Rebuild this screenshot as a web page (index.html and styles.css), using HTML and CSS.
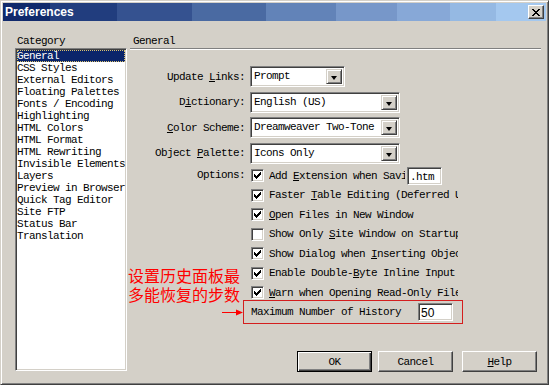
FILE: index.html
```html
<!DOCTYPE html>
<html lang="en">
	<head>
		<meta charset="UTF-8" />
		<link rel="stylesheet" href="styles.css">
		<title>Preferences</title>
	</head>
	<body>
		<div class="window">
			<div class="titlebar">
				<span class="title">Preferences</span>
				<span class="close">
					<svg width="8" height="7" viewBox="0 0 8 7" shape-rendering="crispEdges">
						<path d="M0 0h2v1h-2zM6 0h2v1h-2zM1 1h2v1h-2zM5 1h2v1h-2zM2 2h4v1h-4zM3 3h2v1h-2zM2 4h4v1h-4zM1 5h2v1h-2zM5 5h2v1h-2zM0 6h2v1h-2zM6 6h2v1h-2z" fill="#000"/>
					</svg>
				</span>
			</div>

			<div class="content">
				<div class="category">
					<div class="caption">Category</div>
					<ul class="list">
						<li class="selected">General</li>
						<li>CSS Styles</li>
						<li>External Editors</li>
						<li>Floating Palettes</li>
						<li>Fonts / Encoding</li>
						<li>Highlighting</li>
						<li>HTML Colors</li>
						<li>HTML Format</li>
						<li>HTML Rewriting</li>
						<li>Invisible Elements</li>
						<li>Layers</li>
						<li>Preview in Browser</li>
						<li>Quick Tag Editor</li>
						<li>Site FTP</li>
						<li>Status Bar</li>
						<li>Translation</li>
					</ul>
				</div>

				<div class="panel">
					<div class="panel-head">General</div>

					<div class="fields">
						<span class="label">Update <u>L</u>inks:</span>
						<div class="combo short"><span class="value">Prompt</span><span class="drop"></span></div>

						<span class="label">D<u>i</u>ctionary:</span>
						<div class="combo"><span class="value">English (US)</span><span class="drop"></span></div>

						<span class="label"><u>C</u>olor Scheme:</span>
						<div class="combo"><span class="value">Dreamweaver Two-Tone</span><span class="drop"></span></div>

						<span class="label">Object <u>P</u>alette:</span>
						<div class="combo"><span class="value">Icons Only</span><span class="drop"></span></div>
					</div>

					<div class="options">
						<span class="label opt-label">Options:</span>
						<div class="opt-list">
							<div class="opt">
								<span class="check on"></span>
								<span class="opt-text narrow">Add <u>E</u>xtension when Saving:</span>
								<span class="textbox ext">.htm</span>
							</div>
							<div class="opt">
								<span class="check on"></span>
								<span class="opt-text">Faster <u>T</u>able Editing (Deferred Update)</span>
							</div>
							<div class="opt">
								<span class="check on"></span>
								<span class="opt-text"><u>O</u>pen Files in New Window</span>
							</div>
							<div class="opt">
								<span class="check"></span>
								<span class="opt-text">Show Only <u>S</u>ite Window on Startup</span>
							</div>
							<div class="opt">
								<span class="check on"></span>
								<span class="opt-text">Show Dialog when <u>I</u>nserting Objects</span>
							</div>
							<div class="opt">
								<span class="check on"></span>
								<span class="opt-text">Enable Double-<u>B</u>yte Inline Input</span>
							</div>
							<div class="opt">
								<span class="check on"></span>
								<span class="opt-text"><u>W</u>arn when Opening Read-Only Files</span>
							</div>
							<div class="opt history">
								<span class="history-text">Maximum Number of History</span>
								<span class="textbox num">50</span>

								<!-- annotation drawn over the dialog -->
								<span class="mark"></span>
								<span class="note">设置历史面板最<br>多能恢复的步数</span>
								<svg class="arrow" width="22" height="7" viewBox="0 0 22 7">
									<path d="M0 3.5h15" stroke="#ff0000" stroke-width="1"/>
									<path d="M14 0.5L21 3.5L14 6.5z" fill="#ff0000"/>
								</svg>
							</div>
						</div>
					</div>

					<div class="buttons">
						<button class="btn default">OK</button>
						<button class="btn cancel">Cancel</button>
						<button class="btn help"><u>H</u>elp</button>
					</div>
				</div>
			</div>
		</div>
	</body>
</html>
```

FILE: styles.css
```css
* {
	padding: 0;
	margin: 0;
	box-sizing: border-box;
}

body {
	background-color: #d4d0c8;
	font-family: "Liberation Mono", "DejaVu Sans Mono", monospace;
	font-size: 11px;
	letter-spacing: -0.6px;
	color: #000;
}

u {
	text-decoration: underline;
	text-underline-offset: 1px;
}

.window {
	width: 549px;
	height: 385px;
	display: flex;
	flex-direction: column;
	background-color: #d4d0c8;
	border: 1px solid;
	border-color: #d4d0c8 #404040 #404040 #d4d0c8;
	padding: 2px;
	box-shadow: inset 1px 1px #fff, inset -1px -1px #808080;
}

/* title bar */
.titlebar {
	height: 18px;
	display: flex;
	align-items: center;
	justify-content: space-between;
	padding: 0 2px;
	background: linear-gradient(to right,
		#10296b 0 47px,
		#213d7e 47px 114px,
		#355290 114px 189px,
		#4a6aa2 189px 263px,
		#6283b8 263px 333px,
		#7797c9 333px 394px,
		#87a8d7 394px 447px,
		#95b9e3 447px 493px,
		#a4c8ef 493px);
}

.title {
	font-family: "Liberation Sans", Arial, sans-serif;
	font-weight: bold;
	font-size: 12px;
	letter-spacing: 0;
	color: #fff;
}

.close {
	width: 16px;
	height: 14px;
	display: flex;
	align-items: center;
	justify-content: center;
	background-color: #d4d0c8;
	border: 1px solid;
	border-color: #fff #404040 #404040 #fff;
	box-shadow: inset -1px -1px #808080;
}

/* main area */
.content {
	flex: 1;
	display: flex;
	gap: 3px;
	padding: 14px 5px 10px 12px;
}

.category {
	width: 112px;
	display: flex;
	flex-direction: column;
}

.caption {
	height: 13px;
	line-height: 13px;
	padding-left: 2px;
}

.list {
	flex: 1;
	margin-bottom: 1px;
	list-style: none;
	overflow: hidden;
	background-color: #fff;
	border: 1px solid;
	border-color: #808080 #fff #fff #808080;
	box-shadow: inset 1px 1px #404040, inset -1px -1px #d4d0c8;
	padding: 1px;
}

.list li {
	height: 12px;
	line-height: 12px;
	white-space: nowrap;
}

.list .selected {
	background-color: #0a246a;
	color: #fff;
	outline: 1px dotted #d8c070;
	outline-offset: -1px;
}

.panel {
	flex: 1;
	display: flex;
	flex-direction: column;
}

.panel-head {
	height: 14px;
	line-height: 12px;
	padding-left: 3px;
	border-bottom: 1px solid #808080;
	box-shadow: 0 1px #fff;
}

.fields {
	display: grid;
	grid-template-columns: 115px auto;
	grid-auto-rows: 21px;
	column-gap: 5px;
	row-gap: 4.5px;
	align-items: center;
	margin-top: 17px;
}

.label {
	text-align: right;
	white-space: nowrap;
}

/* combo boxes */
.combo {
	width: 150px;
	height: 21px;
	display: flex;
	align-items: stretch;
	background-color: #fff;
	border: 1px solid;
	border-color: #808080 #fff #fff #808080;
	box-shadow: inset 1px 1px #404040, inset -1px -1px #d4d0c8;
	padding: 2px;
}

.combo.short {
	width: 95px;
}

.combo .value {
	flex: 1;
	line-height: 15px;
	padding-left: 1px;
	white-space: nowrap;
	overflow: hidden;
}

.combo .drop {
	width: 16px;
	background-color: #d4d0c8;
	border: 1px solid;
	border-color: #d4d0c8 #404040 #404040 #d4d0c8;
	box-shadow: inset 1px 1px #fff, inset -1px -1px #808080;
	position: relative;
}

.combo .drop::after {
	content: "";
	position: absolute;
	left: 4px;
	top: 6px;
	border-left: 3.5px solid transparent;
	border-right: 3.5px solid transparent;
	border-top: 4px solid #000;
}

/* options */
.options {
	display: grid;
	grid-template-columns: 115px 1fr;
	column-gap: 5px;
	margin-top: 2.5px;
}

.opt-label {
	line-height: 19.5px;
}

.opt-list {
	display: grid;
	grid-auto-rows: 19.5px;
}

.opt {
	display: flex;
	align-items: center;
	gap: 5px;
	padding-left: 1px;
	white-space: nowrap;
}

.check {
	width: 13px;
	height: 13px;
	flex: none;
	background-color: #fff;
	border: 1px solid;
	border-color: #808080 #fff #fff #808080;
	box-shadow: inset 1px 1px #404040, inset -1px -1px #d4d0c8;
}

.check.on {
	background: #fff url("data:image/svg+xml,%3Csvg xmlns='http://www.w3.org/2000/svg' width='11' height='11' shape-rendering='crispEdges'%3E%3Cpath d='M8 2h1v1h-1zM7 3h2v1h-2zM2 4h1v1h-1zM6 4h3v1h-3zM2 5h2v1h-2zM5 5h3v1h-3zM2 6h5v1h-5zM3 7h3v1h-3zM4 8h1v1h-1z' fill='%23000'/%3E%3C/svg%3E") no-repeat 0 0;
}

.opt-text {
	width: 189px;
	overflow: hidden;
}

.opt-text.narrow {
	width: 136px;
}

.textbox {
	height: 18px;
	line-height: 14px;
	flex: none;
	background-color: #fff;
	border: 1px solid;
	border-color: #808080 #fff #fff #808080;
	box-shadow: inset 1px 1px #404040, inset -1px -1px #d4d0c8;
	padding: 2px 2px;
}

.textbox.ext {
	width: 35px;
	margin-left: -3px;
}

.history {
	position: relative;
	gap: 0;
}

.history-text {
	width: 167px;
}

.textbox.num {
	width: 35px;
	font-family: "Liberation Sans", Arial, sans-serif;
	font-size: 12px;
	letter-spacing: 0;
}

/* red annotation */
.mark {
	position: absolute;
	left: -7px;
	top: -2.5px;
	width: 220px;
	height: 24px;
	border: 1px solid #d41e1e;
}

.note {
	position: absolute;
	left: -122px;
	top: -37px;
	font-family: "Noto Sans CJK SC", sans-serif;
	font-size: 16px;
	line-height: 19px;
	letter-spacing: 0;
	color: #ff0000;
}

.arrow {
	position: absolute;
	left: -28px;
	top: 6px;
}

/* buttons */
.buttons {
	margin-top: auto;
	display: flex;
	justify-content: flex-end;
	padding-right: 4px;
}

.btn {
	width: 75px;
	height: 21px;
	font-family: inherit;
	font-size: 11px;
	letter-spacing: -0.6px;
	color: #000;
	background-color: #d4d0c8;
	border: 1px solid;
	border-color: #fff #404040 #404040 #fff;
	box-shadow: inset -1px -1px #808080;
}

.btn.default {
	border: 1px solid #000;
	box-shadow: inset 1px 1px #fff, inset -1px -1px #404040, inset -2px -2px #808080;
}

.cancel {
	margin-left: 6px;
}

.help {
	margin-left: 9px;
}
```
